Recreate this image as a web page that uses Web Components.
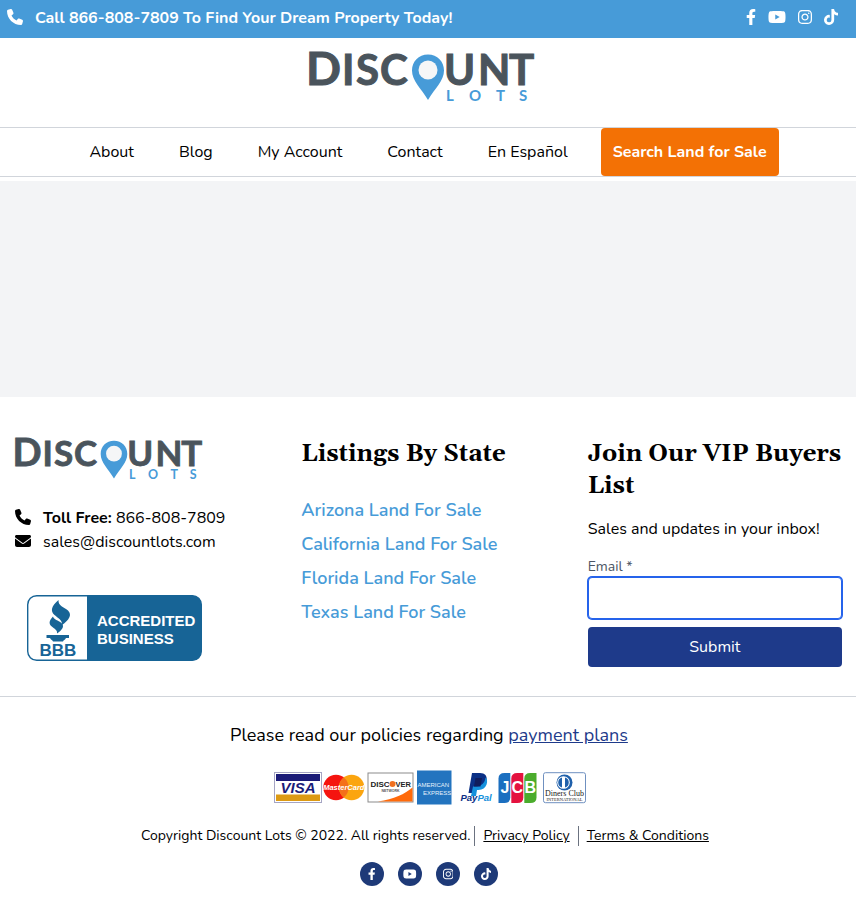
<!DOCTYPE html>
<html lang="en">
<head>
<meta charset="utf-8">
<meta name="viewport" content="width=device-width, initial-scale=1">
<title>Discount Lots</title>
<style>
  body { margin: 0; background: #fff; color: #000; font: 16px/24px Nunito, "Open Sans", sans-serif; }
</style>
</head>
<body>
<discount-page></discount-page>

<script>
const ICONS = {
  phone: ['0 0 512 512', 'M164.9 24.6c-7.7-18.6-28-28.5-47.4-23.2l-88 24C12.1 30.2 0 46 0 64C0 311.4 200.6 512 448 512c18 0 33.8-12.1 38.6-29.5l24-88c5.3-19.4-4.6-39.7-23.2-47.4l-96-40c-16.3-6.8-35.2-2.1-46.3 11.6L304.7 368C234.3 334.7 177.3 277.7 144 207.3L193.3 167c13.7-11.2 18.4-30 11.6-46.3l-40-96z'],
  envelope: ['0 0 512 512', 'M48 64C21.5 64 0 85.5 0 112c0 15.1 7.1 29.3 19.2 38.4L236.8 313.6c11.4 8.5 27 8.5 38.4 0L492.8 150.4c12.1-9.1 19.2-23.3 19.2-38.4c0-26.5-21.5-48-48-48H48zM0 176V384c0 35.3 28.7 64 64 64H448c35.3 0 64-28.7 64-64V176L294.4 339.2c-22.8 17.1-54 17.1-76.8 0L0 176z'],
  facebook: ['0 0 320 512', 'M279.14 288l14.22-92.66h-88.91v-60.13c0-25.35 12.42-50.06 52.24-50.06h40.42V6.26S260.43 0 225.36 0c-73.22 0-121.08 44.38-121.08 124.72v70.62H22.89V288h81.39v224h100.17V288z'],
  youtube: ['0 0 576 512', 'M549.655 124.083c-6.281-23.65-24.787-42.276-48.284-48.597C458.781 64 288 64 288 64S117.22 64 74.629 75.486c-23.497 6.322-42.003 24.947-48.284 48.597-11.412 42.867-11.412 132.305-11.412 132.305s0 89.438 11.412 132.305c6.281 23.65 24.787 41.5 48.284 47.821C117.22 448 288 448 288 448s170.78 0 213.371-11.486c23.497-6.321 42.003-24.171 48.284-47.821 11.412-42.867 11.412-132.305 11.412-132.305s0-89.438-11.412-132.305zm-317.51 213.508V175.185l142.739 81.205-142.739 81.201z'],
  instagram: ['0 0 448 512', 'M224.1 141c-63.6 0-114.9 51.3-114.9 114.9s51.3 114.9 114.9 114.9S339 319.5 339 255.9 287.7 141 224.1 141zm0 189.6c-41.1 0-74.7-33.5-74.7-74.7s33.5-74.7 74.7-74.7 74.7 33.5 74.7 74.7-33.6 74.7-74.7 74.7zm146.4-194.3c0 14.9-12 26.8-26.8 26.8-14.9 0-26.8-12-26.8-26.8s12-26.8 26.8-26.8 26.8 12 26.8 26.8zm76.1 27.2c-1.7-35.9-9.9-67.7-36.2-93.9-26.2-26.2-58-34.4-93.9-36.2-37-2.1-147.9-2.1-184.9 0-35.8 1.7-67.6 9.9-93.9 36.1s-34.4 58-36.2 93.9c-2.1 37-2.1 147.9 0 184.9 1.7 35.9 9.9 67.7 36.2 93.9s58 34.4 93.9 36.2c37 2.1 147.9 2.1 184.9 0 35.9-1.7 67.7-9.9 93.9-36.2 26.2-26.2 34.4-58 36.2-93.9 2.1-37 2.1-147.8 0-184.8zM398.8 388c-7.8 19.6-22.9 34.7-42.6 42.6-29.5 11.7-99.5 9-132.1 9s-102.7 2.6-132.1-9c-19.6-7.8-34.7-22.9-42.6-42.6-11.7-29.5-9-99.5-9-132.1s-2.6-102.7 9-132.1c7.8-19.6 22.9-34.7 42.6-42.6 29.5-11.7 99.5-9 132.1-9s102.7-2.6 132.1 9c19.6 7.8 34.7 22.9 42.6 42.6 11.7 29.5 9 99.5 9 132.1s2.7 102.7-9 132.1z'],
  tiktok: ['0 0 448 512', 'M448,209.91a210.06,210.06,0,0,1-122.77-39.25V349.38A162.55,162.55,0,1,1,185,188.31V278.2a74.62,74.62,0,1,0,52.23,71.18V0l88,0a121.18,121.18,0,0,0,1.86,22.17h0A122.18,122.18,0,0,0,381,102.39a121.43,121.43,0,0,0,67,20.14Z']
};

function define(name, html) {
  const template = document.createElement('template');
  template.innerHTML = html;
  customElements.define(name, class extends HTMLElement {
    constructor() {
      super();
      this.attachShadow({ mode: 'open' }).append(template.content.cloneNode(true));
    }
  });
}

customElements.define('site-icon', class extends HTMLElement {
  constructor() { super(); this.attachShadow({ mode: 'open' }); }
  connectedCallback() {
    const [box, path] = ICONS[this.getAttribute('name')];
    this.shadowRoot.innerHTML = `
      <style>
        :host { display: block; height: var(--icon-size, 16px); }
        svg { display: block; height: 100%; fill: currentColor; }
      </style>
      <svg viewBox="${box}" aria-hidden="true"><path d="${path}"/></svg>`;
  }
});

define('brand-logo', `
  <style>
    :host { display: block; }
    svg { display: block; width: 100%; overflow: visible; font-family: Lato, sans-serif; font-weight: 700; }
    .dark { fill: #4a545c; stroke: #4a545c; stroke-width: 1; font-size: 42px; }
    .blue { fill: #479bd8; }
    .lots { font-size: 15px; }
  </style>
  <svg viewBox="0 0 226 54" role="img" aria-label="Discount Lots">
    <text class="dark" y="35"><tspan x="-3" font-size="46">D</tspan><tspan x="33 47 71">ISC</tspan></text>
    <path class="blue" d="M119 4.500C109.500 4.500 103 11.500 103 20.500C103 31 112 38 119 50C126 38 135 31 135 20.500C135 11.500 128.500 4.500 119 4.500Z"/>
    <circle cx="119" cy="20" r="9.500" fill="#f5f6f7"/>
    <text class="dark" y="35" x="135 169 200">UNT</text>
    <text class="blue lots" y="51" x="137 160 187 210">LOTS</text>
  </svg>`);

define('social-links', `
  <style>
    :host { display: block; }
    nav { display: flex; gap: var(--social-gap, 12px); }
    a { display: flex; align-items: center; justify-content: center; color: #fff; box-sizing: border-box;
        min-width: var(--disc, auto); height: var(--disc, auto); border-radius: 50%; background: var(--disc-color, none); }
  </style>
  <nav aria-label="Social media">
    <a href="#facebook" aria-label="Facebook"><site-icon name="facebook"></site-icon></a>
    <a href="#youtube" aria-label="YouTube"><site-icon name="youtube"></site-icon></a>
    <a href="#instagram" aria-label="Instagram"><site-icon name="instagram"></site-icon></a>
    <a href="#tiktok" aria-label="TikTok"><site-icon name="tiktok"></site-icon></a>
  </nav>`);

define('top-bar', `
  <style>
    :host { display: flex; justify-content: space-between; align-items: center; padding: 6px 18px 8px 7px;
            background: #479bd8; color: #fff; font-weight: 700; }
    a { display: flex; align-items: center; gap: 12px; color: inherit; text-decoration: none; }
    a site-icon, social-links { padding-bottom: 2px; }
  </style>
  <a href="tel:8668087809"><site-icon name="phone"></site-icon><span><slot></slot></span></a>
  <social-links></social-links>`);

define('site-header', `
  <style>
    :host { display: block; }
    .logo { display: flex; justify-content: center; padding: 12px 12px 23px 0; }
    brand-logo { width: 226px; }
    nav { display: flex; justify-content: center; align-items: center; gap: 45px; padding-left: 12px;
          border: solid #d1d5db; border-width: 1px 0; }
    a { color: inherit; text-decoration: none; }
    .search { margin-left: -12px; padding: 12px; border-radius: 4px; background: #f37105; color: #fff; font-weight: 700; }
  </style>
  <a class="logo" href="#home"><brand-logo></brand-logo></a>
  <nav aria-label="Main">
    <a href="#about">About</a><a href="#blog">Blog</a><a href="#account">My Account</a>
    <a href="#contact">Contact</a><a href="#es" lang="es">En Español</a>
    <a class="search" href="#search">Search Land for Sale</a>
  </nav>`);

define('bbb-badge', `
  <style>
    :host { display: block; width: 175px; }
    svg { display: block; width: 100%; font-family: "Liberation Sans", sans-serif; font-weight: 700; }
  </style>
  <svg viewBox="0 0 175 66" role="img" aria-label="BBB Accredited Business">
    <rect x="0.700" y="0.700" width="173.600" height="64.600" rx="9" fill="#fff" stroke="#176496" stroke-width="1.400"/>
    <path d="M60 0.500H165a9.500 9.500 0 0 1 9.500 9.500V56a9.500 9.500 0 0 1-9.500 9.500H60Z" fill="#176496"/>
    <g fill="#176496">
      <path d="M31.500 5C24.500 11 23 16 27.500 20C31 23 35.500 25 35 30C42 25 45.500 20 41 15.500C37 12 31 11 31.500 5Z"/>
      <path d="M26 21.500C21.500 26 21.500 29.500 26 32.500C28.500 34.500 30.500 35.500 30 38.500C35 35 38 31.500 34.500 28C31 25 27 25 26 21.500Z"/>
      <path d="M19.500 40H42V43H39C38 45 36.500 45 36 46.500H26C25.500 45 24 45 23 43H19.500Z"/>
      <text x="12.500" y="60.500" font-size="17">BBB</text>
    </g>
    <text fill="#fff" font-size="15"><tspan x="70" y="31">ACCREDITED</tspan><tspan x="70" y="49">BUSINESS</tspan></text>
  </svg>`);

define('contact-column', `
  <style>
    :host { display: block; }
    brand-logo { width: 188px; }
    ul { list-style: none; margin: 24px 0 41px; padding: 0; }
    li { display: flex; align-items: center; gap: 12px; }
    li site-icon { padding-bottom: 2px; }
    a { color: inherit; text-decoration: none; }
    bbb-badge { margin-left: 12px; }
  </style>
  <brand-logo></brand-logo>
  <ul>
    <li><site-icon name="phone"></site-icon><span><b>Toll Free:</b> <a href="tel:8668087809">866-808-7809</a></span></li>
    <li><site-icon name="envelope"></site-icon><a href="mailto:sales@discountlots.com">sales@discountlots.com</a></li>
  </ul>
  <bbb-badge></bbb-badge>`);

define('footer-heading', `
  <style>
    :host { display: block; }
    h2 { margin: 0; padding-top: 1px; font: 700 24px/32px Gelasio, "Liberation Serif", serif; }
  </style>
  <h2><slot></slot></h2>`);

define('state-listings', `
  <style>
    :host { display: block; }
    ul { list-style: none; margin: 23px 0 0; padding: 0; }
    a { display: block; padding: 3px 0; color: #479bd8; font-size: 18px; line-height: 28px; font-weight: 600; text-decoration: none; }
  </style>
  <footer-heading>Listings By State</footer-heading>
  <ul>
    <li><a href="#arizona">Arizona Land For Sale</a></li>
    <li><a href="#california">California Land For Sale</a></li>
    <li><a href="#florida">Florida Land For Sale</a></li>
    <li><a href="#texas">Texas Land For Sale</a></li>
  </ul>`);

define('vip-signup', `
  <style>
    :host { display: block; }
    p { margin: 15px 0; }
    form { display: flex; flex-direction: column; }
    label { font-size: 14px; line-height: 21px; color: #4b5563; }
    input { height: 42px; box-sizing: border-box; padding: 8px 12px; border: 1px solid #2563eb; border-radius: 4px;
            box-shadow: 0 0 0 1px #2563eb; outline: 0; font: inherit; background: #fff; }
    button { margin-top: 8px; padding: 8px; border: 0; border-radius: 4px; background: #1e3a8a; color: #fff; font: inherit; }
  </style>
  <footer-heading>Join Our VIP Buyers List</footer-heading>
  <p>Sales and updates in your inbox!</p>
  <form>
    <label for="email">Email *</label>
    <input id="email" type="email" required>
    <button type="submit">Submit</button>
  </form>`);

define('payment-cards', `
  <style>
    :host { display: block; width: 312px; }
    svg { display: block; width: 100%; overflow: visible; font-family: "Liberation Sans", sans-serif; font-weight: 700; }
  </style>
  <svg viewBox="0 0 312 35" role="img" aria-label="Accepted payment methods">
    <g>
      <rect x="0.500" y="2.500" width="47" height="30" fill="#fff" stroke="#a5a5c4"/>
      <rect x="2" y="4" width="44" height="7" fill="#1b1c78"/>
      <rect x="2" y="24.500" width="44" height="6.500" fill="#dc9a14"/>
      <text x="24" y="23" font-size="15" font-style="italic" text-anchor="middle" fill="#1b1c78">VISA</text>
    </g>
    <g>
      <circle cx="62" cy="17.500" r="12.700" fill="#f5140f"/>
      <circle cx="77.600" cy="17.500" r="12.700" fill="#fba50f"/>
      <path d="M69.800 7.500a12.700 12.700 0 0 1 0 20a12.700 12.700 0 0 1 0-20Z" fill="#f4701a"/>
      <text x="69.800" y="20" font-size="7.500" font-style="italic" text-anchor="middle" fill="#fff">MasterCard</text>
    </g>
    <g>
      <rect x="94" y="3" width="45" height="29" fill="#fff" stroke="#8b8b8b"/>
      <path d="M138.500 17.500V31.500H104C120 29 131 24 138.500 17.500Z" fill="#ff6a0a"/>
      <text x="96.500" y="17" font-size="8" fill="#222">DISC</text>
      <circle cx="118.500" cy="14" r="3" fill="#f07020"/>
      <text x="121.500" y="17" font-size="7.500" fill="#222">VER</text>
      <text x="116.500" y="22" font-size="3.500" text-anchor="middle" fill="#555">NETWORK</text>
    </g>
    <g>
      <rect x="143" y="0.500" width="34.500" height="34" fill="#2374bf"/>
      <g fill="#e6f2fc" font-size="6" font-weight="400">
        <text x="143.500" y="17">AMERICAN</text><text x="149" y="24.500">EXPRESS</text>
      </g>
    </g>
    <g>
      <path d="M198 3H206C211 3 213.500 6 212.500 10.500C211.500 15 208 17.500 203.500 17.500H201L200 23H194.500Z" fill="#0b3086"/>
      <path d="M211.500 7.500C215 10 213 20 204.500 20H203L202 26H197L199 16.500H202.500C207 16.500 211 13 211.500 7.500Z" fill="#1591dc"/>
      <path d="M201.500 8H208L206.500 16.500H200Z" fill="#101d5c"/>
      <text x="186.500" y="31" font-size="9.500" font-style="italic" fill="#0b3086">Pay<tspan fill="#1591dc">Pal</tspan></text>
    </g>
    <g>
      <path d="M230.500 3H236.300V27.500Q236.300 33 230.500 33H224.500V8.500Q224.500 3 230.500 3Z" fill="#1b6fc0"/>
      <path d="M243.300 3H249.300V27.500Q249.300 33 243.300 33H237.300V8.500Q237.300 3 243.300 3Z" fill="#e4123f"/>
      <path d="M256.300 3H262.500V27.500Q262.500 33 256.300 33H250.300V8.500Q250.300 3 256.300 3Z" fill="#4bac2c"/>
      <text x="226.500 237.500 250.500" y="23" font-size="16" fill="#fff">JCB</text>
    </g>
    <g>
      <rect x="269.500" y="2.700" width="42" height="30" rx="2" fill="#fff" stroke="#6f90c0"/>
      <circle cx="290.500" cy="12.500" r="8" fill="#1f60ab"/>
      <circle cx="289.500" cy="12.500" r="6.300" fill="#fff"/>
      <path d="M288 7.500a5.200 5.200 0 0 0 0 10ZM291 7.500a5.200 5.200 0 0 1 0 10Z" fill="#1f60ab"/>
      <g text-anchor="middle" font-family="Liberation Serif, serif" font-weight="400" fill="#222">
        <text x="290.500" y="26" font-size="8">Diners Club</text>
        <text x="290.500" y="31" font-size="4.500">INTERNATIONAL</text>
      </g>
    </g>
  </svg>`);

define('site-footer', `
  <style>
    :host { display: block; }
    .columns { display: grid; grid-template-columns: repeat(3, minmax(0, 1fr)); gap: 32px;
               padding: 40px 14px 29px 15px; border-bottom: 1px solid #d1d5db; }
    .bottom { display: flex; flex-direction: column; align-items: center; padding: 24px 0 29px 2px; }
    p { margin: 0; font-size: 18px; line-height: 28px; }
    p a { color: #1e3a8a; }
    payment-cards { margin: 21px 0 21px 2px; }
    .legal { display: flex; font-size: 14px; line-height: 20px; margin: 0 8px 16px 0; }
    .legal a { color: inherit; margin-left: 4px; padding: 0 8px; border-left: 1px solid #6b7280; }
    .legal a + a { margin-left: 0; }
    .legal a:last-child { padding-right: 0; }
    social-links { --icon-size: 12px; --disc: 24px; --disc-color: #1e3a78; --social-gap: 14px; }
  </style>
  <footer>
    <div class="columns">
      <contact-column></contact-column>
      <state-listings></state-listings>
      <vip-signup></vip-signup>
    </div>
    <div class="bottom">
      <p>Please read our policies regarding <a href="#plans">payment plans</a></p>
      <payment-cards></payment-cards>
      <div class="legal"><span>Copyright Discount Lots © 2022. All rights reserved.</span><a href="#privacy">Privacy Policy</a><a href="#terms">Terms &amp; Conditions</a></div>
      <social-links></social-links>
    </div>
  </footer>`);

define('discount-page', `
  <style>
    :host { display: block; }
    main { min-height: 216px; margin-top: 4px; background: #f3f4f6; }
  </style>
  <top-bar>Call 866-808-7809 To Find Your Dream Property Today!</top-bar>
  <site-header></site-header>
  <main></main>
  <site-footer></site-footer>`);
</script>
</body>
</html>
